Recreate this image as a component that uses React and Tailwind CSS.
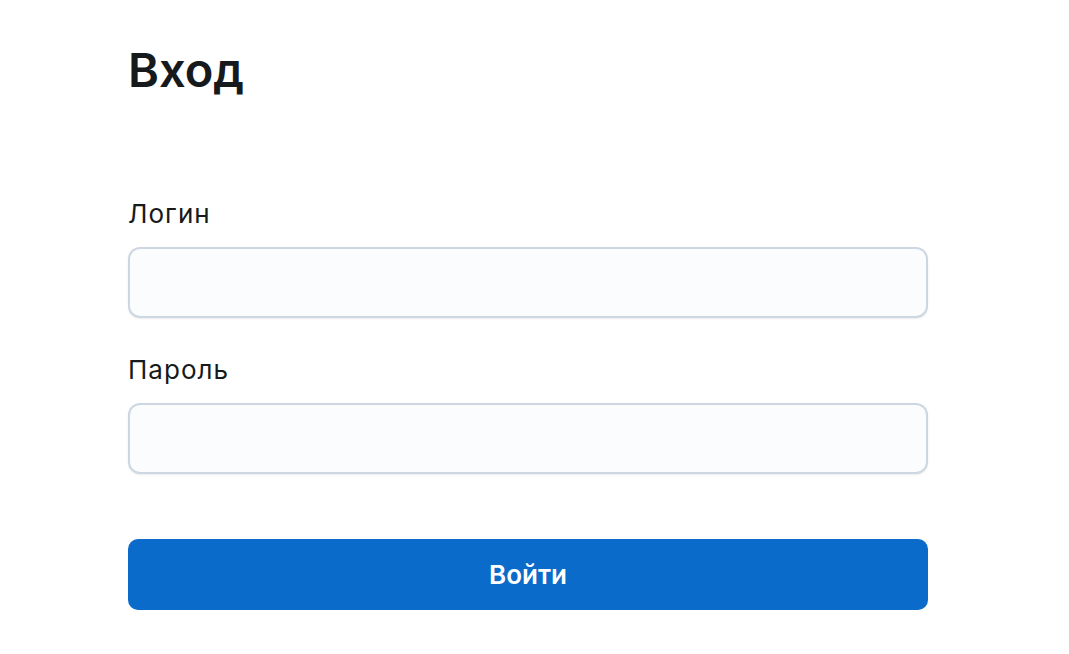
export default function App() {
  return (
    <div className="min-h-screen bg-white font-['Inter','Noto_Sans',sans-serif] text-[#171a1c]">
      <div className="w-[800px] ml-[128px] pt-[42px]">
        <h1 className="text-[47px] leading-[56px] font-semibold">Вход</h1>
        <form className="mt-[100px] flex flex-col" onSubmit={(e) => e.preventDefault()}>
          <label className="text-[26px] leading-[32px] tracking-[0.04em] text-[#171a1c]">Логин</label>
          <input
            type="text"
            className="mt-[17px] h-[71px] w-full rounded-[12px] border-2 border-[#cdd7e1] bg-[#fbfcfe] px-4 text-[24px] shadow-[0_1px_2px_rgba(21,21,21,0.08)] outline-none"
          />
          <label className="mt-[36px] text-[26px] leading-[32px] tracking-[0.04em] text-[#171a1c]">Пароль</label>
          <input
            type="password"
            className="mt-[17px] h-[71px] w-full rounded-[12px] border-2 border-[#cdd7e1] bg-[#fbfcfe] px-4 text-[24px] shadow-[0_1px_2px_rgba(21,21,21,0.08)] outline-none"
          />
          <button
            type="submit"
            className="mt-[65px] h-[71px] w-full rounded-[10px] bg-[#0b6bcb] text-[26px] font-semibold text-white"
          >
            Войти
          </button>
        </form>
      </div>
    </div>
  );
}
